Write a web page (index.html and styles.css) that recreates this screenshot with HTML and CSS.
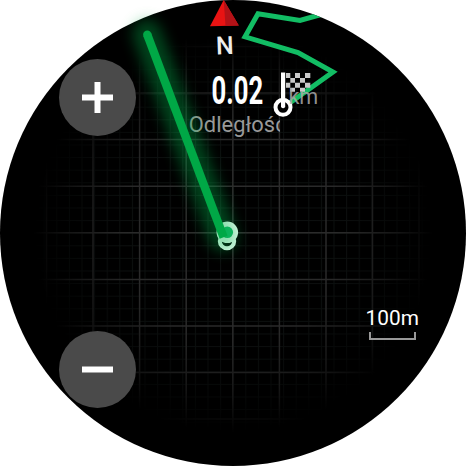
FILE: index.html
```
<!DOCTYPE html>
<html lang="pl">
<head>
<meta charset="utf-8">
<title>Mapa</title>
<link rel="stylesheet" href="styles.css">
</head>
<body>
<main class="watch">
<svg class="map" viewBox="0 0 466 466">
  <defs>
    <pattern id="minor" x="232.7" y="232.7" width="12.6" height="12.6" patternUnits="userSpaceOnUse">
      <path d="M0 .5H12.6M.5 0V12.6" class="minor"/>
    </pattern>
    <radialGradient id="fade" gradientUnits="userSpaceOnUse" cx="233" cy="233" r="200">
      <stop offset="0" stop-color="#fff"/><stop offset=".55" stop-color="#fff" stop-opacity=".88"/><stop offset=".82" stop-color="#fff" stop-opacity=".45"/><stop offset="1" stop-color="#fff" stop-opacity="0"/>
    </radialGradient>
    <mask id="vignette" maskUnits="userSpaceOnUse" x="0" y="0" width="466" height="466"><rect width="466" height="466" fill="url(#fade)"/></mask>
    <clipPath id="dial"><circle cx="233" cy="233" r="233"/></clipPath>
    <clipPath id="label"><rect x="180" y="105" width="100" height="40"/></clipPath>
    <filter id="blur" filterUnits="userSpaceOnUse" x="60" y="-50" width="260" height="370"><feGaussianBlur stdDeviation="7"/></filter>
  </defs>
  <circle cx="233" cy="233" r="233"/>
  <g mask="url(#vignette)">
    <rect width="466" height="466" fill="url(#minor)"/>
    <path class="major" d="M46.5 0V466M93 0V466M139.6 0V466M186.2 0V466M232.8 0V466M279.4 0V466M326 0V466M372.5 0V466M419 0V466M0 46.5H466M0 93H466M0 139.6H466M0 186.2H466M0 232.8H466M0 279.4H466M0 326H466M0 372.5H466M0 419H466"/>
  </g>
  <g clip-path="url(#dial)">
    <path class="track" d="M330 12L300 20.5L258 13.7L245 36.8L298 52.5L333 72L284 107"/>
  </g>
  <text class="caption" x="188.8" y="131.5" clip-path="url(#label)">Odległość</text>
  <circle class="ring pale" cx="227" cy="241" r="7.2"/>
  <circle class="ring pale start" cx="227.3" cy="232.3" r="8.3"/>
  <path class="glow" filter="url(#blur)" d="M147 34L223 237"/>
  <path class="heading" d="M147.3 34.8L223.6 237.2"/>
  <circle class="cap" cx="147.3" cy="34.8" r="4.2"/>
  <path fill="#e91313" d="M223.7 0L238.8 25.6L210 26.2Z"/>
  <path fill="#b31217" d="M223.7 0L238.8 25.6L225.5 25.8Z"/>
  <text class="north" x="216" y="54.3" transform="rotate(-2 225 45)">N</text>
  <text class="value" transform="translate(211.6 103.8) scale(.668 1)">0.02</text>
  <path fill="#c9c9c9" d="M286 73h4.3v5h-4.3zM295 73h5v5h-5zM305 73h5.3v5h-5.3zM290.3 78h4.7v4.7h-4.7zM300 78h5v4.7h-5zM286 82.7h4.3v5h-4.3zM295 82.7h5v5h-5zM305 82.7h5.3v5h-5.3zM290.3 87.7h4.7v4h-4.7zM300 87.7h5v4h-5z"/>
  <circle class="ring finish" cx="283" cy="107.3" r="7.5"/>
  <path fill="#fff" d="M281 72.5h4.2V107q-2.1 2.5-4.2 0z"/>
  <text class="unit" x="288.4" y="104">km</text>
  <text class="scale" x="365.6" y="325">100m</text>
  <path class="bar" d="M370 332V339H415V332"/>
</svg>
<div class="controls">
  <button class="zoom" aria-label="+"><svg viewBox="0 0 31 31"><path d="M0 12.5H12.5V0H18.5V12.5H31V18.5H18.5V31H12.5V18.5H0Z"/></svg></button>
  <button class="zoom" aria-label="−"><svg viewBox="0 0 31 31"><path d="M0 12.5H31V18.5H0Z"/></svg></button>
</div>
</main>
</body>
</html>
```
FILE: styles.css
```
body { margin: 0; background: #fff; overflow: hidden; }
.watch { display: grid; width: 466px; height: 466px; font-family: Roboto, sans-serif; }
.map, .controls { grid-area: 1 / 1; }
.map { width: 466px; height: 466px; }
.controls {
  display: flex; flex-direction: column; justify-content: space-between;
  box-sizing: border-box; width: 77px; height: 466px;
  margin-left: 58.5px; padding: 58.5px 0;
}
.zoom {
  display: flex; align-items: center; justify-content: center;
  width: 77px; height: 77px; padding: 0; border: 0; border-radius: 50%;
  background: #4a4a4a;
}
.zoom svg { width: 31px; height: 31px; fill: #fff; }
.minor { fill: none; stroke: #0e1211; stroke-width: 1; }
.major { fill: none; stroke: #2f2f2f; stroke-width: 1.5; }
.track { fill: none; stroke: #12bd64; stroke-width: 5; stroke-miterlimit: 8; }
.heading { fill: none; stroke: #00a846; stroke-width: 8.4; }
.cap { fill: #00a846; }
.glow { fill: none; stroke: #00a846; stroke-width: 29; stroke-linecap: round; opacity: .4; }
.ring { fill: none; stroke: #fff; stroke-width: 4; }
.pale { stroke: #e6fff0; }
.start { fill: #12b864; stroke-width: 5; }
.finish { fill: #000; }
.caption { font-size: 21.9px; fill: #999; }
.unit { font-size: 21.6px; fill: #aaa; fill-opacity: .85; }
.north { font-size: 25px; font-weight: 500; fill: #eee; }
.value { font-size: 38.5px; font-weight: 700; fill: #fff; }
.scale { font-size: 20.8px; fill: #fff; }
.bar { fill: none; stroke: #999; stroke-width: 2; }
```
